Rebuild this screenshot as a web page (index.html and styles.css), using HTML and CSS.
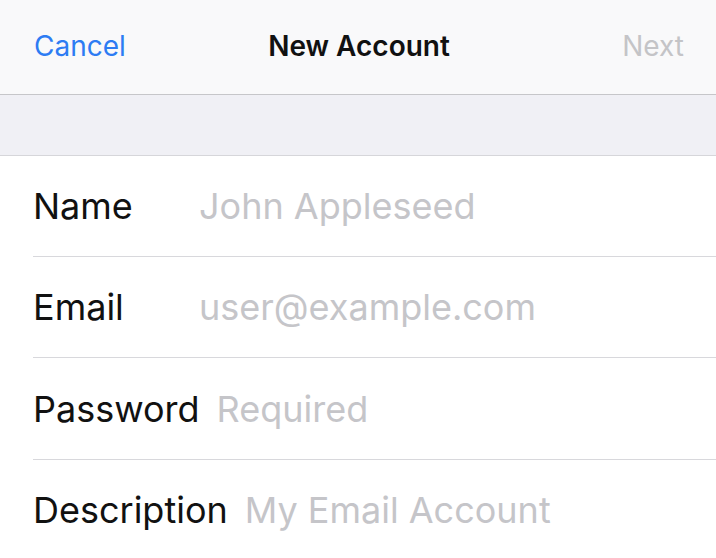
FILE: index.html
```html
<!DOCTYPE html>
<html>
<head>
<meta charset="utf-8">
<link rel="stylesheet" href="styles.css">
</head>
<body>
<div class="screen">
  <header class="navbar">
    <span class="nav-btn cancel">Cancel</span>
    <span class="title">New Account</span>
    <span class="nav-btn next">Next</span>
  </header>
  <div class="band"></div>
  <div class="form">
    <div class="row"><span class="label">Name</span><span class="placeholder">John Appleseed</span></div>
    <div class="row"><span class="label">Email</span><span class="placeholder">user@example.com</span></div>
    <div class="row"><span class="label">Password</span><span class="placeholder">Required</span></div>
    <div class="row"><span class="label">Description</span><span class="placeholder">My Email Account</span></div>
  </div>
</div>
</body>
</html>
```
FILE: styles.css
```css
html, body {
  margin: 0;
  padding: 0;
  background: #ffffff;
}
body {
  font-family: Inter, "Liberation Sans", sans-serif;
  width: 716px;
  height: 558px;
  overflow: hidden;
}
.screen {
  display: flex;
  flex-direction: column;
}
.navbar {
  height: 92px;
  background: #f9f9fa;
  border-bottom: 1px solid #c6c6c9;
  display: grid;
  grid-template-columns: 1fr auto 1fr;
  align-items: center;
  padding: 0 32px 2px 34px;
  font-size: 28px;
  letter-spacing: 0;
}
.cancel { color: #2d7cf3; justify-self: start; }
.title { color: #111; font-weight: 600; }
.next { color: #c4c4c7; justify-self: end; }
.band {
  height: 60px;
  background: #f0f0f5;
  border-bottom: 1px solid #d6d6da;
}
.form {
  padding-left: 33px;
}
.row {
  height: 100px;
  display: flex;
  align-items: center;
  border-bottom: 1px solid #d8d8dc;
  font-size: 36px;
  letter-spacing: 0;
}
.row:nth-child(3) { height: 101px; }
.row:last-child { border-bottom: none; }
.label {
  color: #111;
  min-width: 149px;
  margin-right: 17px;
}
.placeholder {
  color: #c5c5c9;
}
```
